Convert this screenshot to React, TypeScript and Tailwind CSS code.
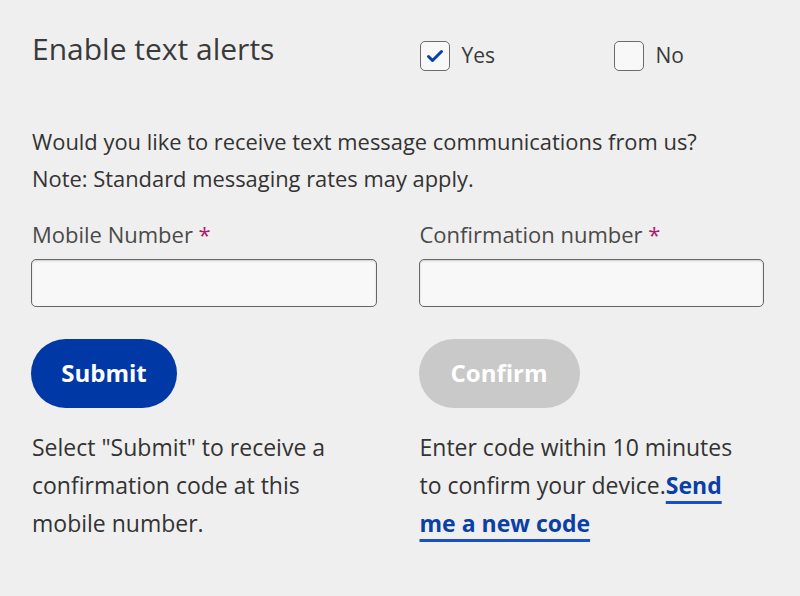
import React from "react";

function Check({ checked, label }: { checked: boolean; label: string }) {
  return (
    <label className="flex items-center gap-[12px]">
      <span className="w-[30px] h-[30px] rounded-[5px] border-[1.5px] border-[#6b6b6b] bg-[#f8f8f8] flex items-center justify-center">
        {checked && (
          <svg width="18" height="14" viewBox="0 0 18 14">
            <path d="M2.5 7.5 L6.5 11.5 L15.5 2.5" fill="none" stroke="#0a3fa6" strokeWidth="3" strokeLinecap="round" strokeLinejoin="round" />
          </svg>
        )}
      </span>
      <span className="text-[21px] text-[#3a3a3a]">{label}</span>
    </label>
  );
}

export default function App() {
  return (
    <div
      className="w-[800px] h-[596px] bg-[#efefef] pl-[31px] pr-[36px] pt-[30px] text-[#333333]"
      style={{ fontFamily: "'Open Sans', 'Noto Sans', sans-serif" }}
    >
      <div className="grid grid-cols-2 gap-x-[42px]">
        <h1 className="text-[30px] leading-[38px] text-[#3a3a3a] pl-[1px]">Enable text alerts</h1>
        <div className="flex items-center pt-[10px] pl-[1px]">
          <div className="w-[194px]">
            <Check checked label="Yes" />
          </div>
          <Check checked={false} label="No" />
        </div>
      </div>

      <p className="mt-[51px] text-[21.9px] leading-[37px] pl-[1px] whitespace-nowrap">
        Would you like to receive text message communications from us?
        <br />
        Note: Standard messaging rates may apply.
      </p>

      <div className="grid grid-cols-2 gap-x-[42px] mt-[22px]">
        <div className="flex flex-col">
          <label className="text-[22px] leading-[30px] text-[#4a4a4a] pl-[1px]">
            Mobile Number <span className="text-[#b0186a]">*</span>
          </label>
          <input className="mt-[10px] h-[48px] w-full rounded-[5px] border-[1.5px] border-[#666] bg-[#f8f8f8] shadow-[inset_0_1px_2px_rgba(0,0,0,0.18)]" />
          <button className="mt-[32px] self-start h-[69px] w-[146px] rounded-full bg-[#0039a6] text-white text-[24px] font-bold">
            Submit
          </button>
          <p className="mt-[20px] text-[23px] leading-[38px] pl-[1px] text-[#333] whitespace-nowrap">
            Select "Submit" to receive a
            <br />
            confirmation code at this
            <br />
            mobile number.
          </p>
        </div>
        <div className="flex flex-col">
          <label className="text-[22px] leading-[30px] text-[#4a4a4a] pl-[1px]">
            Confirmation number <span className="text-[#b0186a]">*</span>
          </label>
          <input className="mt-[10px] h-[48px] w-full rounded-[5px] border-[1.5px] border-[#666] bg-[#f8f8f8] shadow-[inset_0_1px_2px_rgba(0,0,0,0.18)]" />
          <button className="mt-[32px] self-start h-[69px] w-[161px] rounded-full bg-[#c9c9c9] text-white text-[24px] font-bold">
            Confirm
          </button>
          <p className="mt-[20px] text-[23px] leading-[38px] pl-[1px] text-[#333] whitespace-nowrap">
            Enter code within 10 minutes
            <br />
            to confirm your device.
            <a href="#" className="font-bold text-[#0a3fa6] underline decoration-[3px] underline-offset-[7px] decoration-[#1a4fc0]">
              Send
              <br />
              me a new code
            </a>
          </p>
        </div>
      </div>
    </div>
  );
}
